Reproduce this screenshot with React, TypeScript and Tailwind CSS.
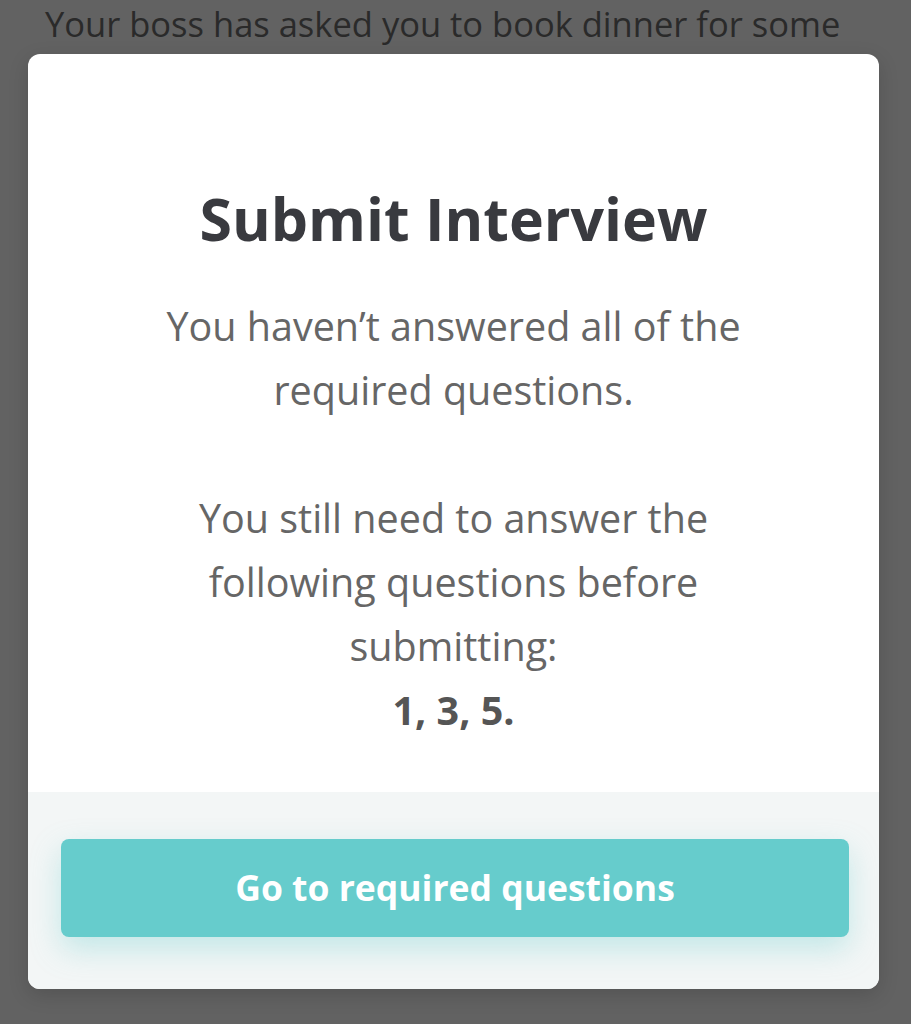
export default function App() {
  return (
    <div className="relative w-[911px] h-[1024px] overflow-hidden bg-[#626262] font-['Open_Sans',sans-serif]">
      {/* page behind the overlay */}
      <p className="pl-[45px] text-[34.5px] leading-[47px] text-[#2a2a2a] whitespace-nowrap">
        Your boss has asked you to book dinner for some
      </p>

      {/* modal */}
      <div className="absolute inset-0 flex justify-start pl-[28px] pt-[54px]">
        <div className="w-[851px] h-[935px] rounded-[12px] bg-white overflow-hidden flex flex-col shadow-[0_6px_20px_rgba(0,0,0,0.15)]">
          <div className="flex-1 flex flex-col items-center text-center pt-[128px]">
            <h1 className="text-[59px] leading-[72px] font-bold text-[#393a3f]">Submit Interview</h1>
            <div className="mt-[40px] text-[39.5px] leading-[64px] text-[#666666]">
              <p>You haven’t answered all of the</p>
              <p>required questions.</p>
              <p className="mt-[64px]">You still need to answer the</p>
              <p>following questions before</p>
              <p>submitting:</p>
              <p className="font-bold text-[#555555]">1, 3, 5.</p>
            </div>
          </div>
          <div className="h-[197px] bg-[#f3f6f6] pl-[33px] pr-[30px] pt-[47px]">
            <button className="w-full h-[98px] rounded-[8px] bg-[#66cccc] text-white font-bold text-[35.5px] shadow-[0_12px_30px_rgba(102,204,204,0.35)]">
              Go to required questions
            </button>
          </div>
        </div>
      </div>
    </div>
  );
}
